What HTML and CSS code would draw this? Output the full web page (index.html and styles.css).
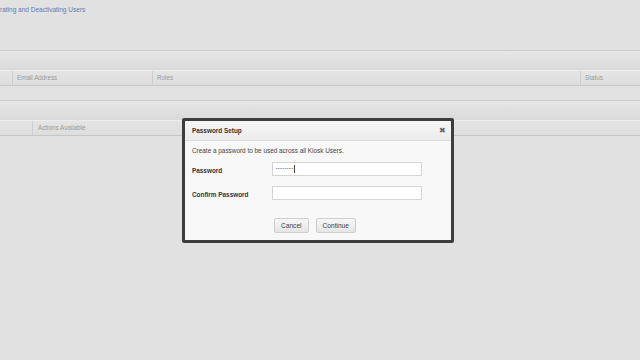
FILE: index.html
```html
<!DOCTYPE html>
<html>
<head>
<meta charset="utf-8">
<link rel="stylesheet" href="styles.css">
</head>
<body>
<div class="page">
  <div class="top">
    <a class="crumb" href="#">rating and Deactivating Users</a>
  </div>
  <div class="band"></div>
  <div class="thead">
    <div class="col c0"></div>
    <div class="col c1">Email Address</div>
    <div class="col c2">Roles</div>
    <div class="col c3">Status</div>
  </div>
  <div class="row"></div>
  <div class="band"></div>
  <div class="thead">
    <div class="col d0"></div>
    <div class="col d1">Actions Available</div>
  </div>
  <div class="rest"></div>

  <div class="dialog">
    <div class="dlg-head">
      <span class="dlg-title">Password Setup</span>
      <span class="dlg-close">&#x2716;</span>
    </div>
    <div class="dlg-body">
      <p class="intro">Create a password to be used across all Kiosk Users.</p>
      <div class="field">
        <label class="lbl">Password</label>
        <div class="input"><span class="dots">&#8226;&#8226;&#8226;&#8226;&#8226;&#8226;&#8226;&#8226;&#8226;&#8226;</span><span class="caret"></span></div>
      </div>
      <div class="field f2">
        <label class="lbl">Confirm Password</label>
        <div class="input"></div>
      </div>
      <div class="actions">
        <button class="btn">Cancel</button>
        <button class="btn">Continue</button>
      </div>
    </div>
  </div>
</div>
</body>
</html>
```
FILE: styles.css
```css
* { box-sizing: border-box; }
html, body { margin: 0; padding: 0; }
body {
  width: 640px;
  height: 360px;
  overflow: hidden;
  background: #e1e1e1;
  font-family: "Liberation Sans", Arial, sans-serif;
}
.page {
  position: relative;
  width: 640px;
  height: 360px;
  display: flex;
  flex-direction: column;
}
.top {
  height: 50px;
  padding-top: 5px;
}
.crumb {
  display: block;
  font-size: 6.5px;
  line-height: 9px;
  color: #5b7db3;
  text-decoration: none;
}
.band {
  height: 20px;
  border-top: 1px solid #cbcbcb;
  background: linear-gradient(#e6e6e6, #dadada);
}
.thead {
  height: 16px;
  display: flex;
  border-top: 1px solid #ececec;
  border-bottom: 1px solid #c6c6c6;
  background: linear-gradient(#e4e4e4, #dddddd);
}
.col {
  font-size: 6.3px;
  line-height: 14px;
  color: #9a9a9a;
  padding-left: 4px;
  border-left: 1px solid #cfcfcf;
}
.c0 { width: 12px; border-left: none; }
.c1 { width: 140px; }
.c2 { width: 428px; }
.c3 { flex: 1; }
.d0 { width: 32px; border-left: none; }
.d1 { flex: 1; padding-left: 5px; }
.row {
  height: 14px;
  background: #e2e2e2;
}
.rest {
  flex: 1;
  background: #e1e1e1;
}

.dialog {
  position: absolute;
  left: 182px;
  top: 118px;
  width: 272px;
  height: 125px;
  border: 3px solid #3d3d3d;
  border-radius: 2px;
  background: #f8f8f8;
  display: flex;
  flex-direction: column;
}
.dlg-head {
  height: 20px;
  flex: none;
  display: flex;
  align-items: center;
  justify-content: space-between;
  padding: 0 5px 0 7px;
  background: linear-gradient(#f6f6f6, #ececec);
  border-bottom: 1px solid #dcdcdc;
}
.dlg-title {
  font-size: 6.4px;
  font-weight: bold;
  color: #333;
}
.dlg-close {
  font-size: 7.5px;
  color: #666;
  line-height: 8px;
}
.dlg-body {
  flex: 1;
  padding: 5px 7px 0 7px;
  display: flex;
  flex-direction: column;
}
.intro {
  margin: 0;
  font-size: 6.4px;
  line-height: 10px;
  color: #444;
}
.field {
  display: flex;
  align-items: center;
  margin-top: 6px;
}
.f2 { margin-top: 10px; }
.lbl {
  width: 80px;
  padding-top: 2px;
  font-size: 6.4px;
  font-weight: bold;
  color: #333;
}
.input {
  width: 150px;
  height: 14px;
  background: #fff;
  border: 1px solid #d4d4d4;
  display: flex;
  align-items: center;
  padding-left: 3px;
}
.dots {
  font-size: 3.4px;
  letter-spacing: 0.6px;
  color: #555;
  line-height: 6px;
}
.caret {
  width: 1px;
  height: 8px;
  background: #444;
  margin-left: 0;
}
.actions {
  display: flex;
  gap: 7px;
  margin-top: 18px;
  padding-left: 82px;
}
.btn {
  height: 15px;
  padding: 0 6px;
  font-family: "Liberation Sans", Arial, sans-serif;
  font-size: 6.6px;
  color: #444;
  background: linear-gradient(#f7f7f7, #e5e5e5);
  border: 1px solid #cdcdcd;
  border-radius: 2px;
}
```
